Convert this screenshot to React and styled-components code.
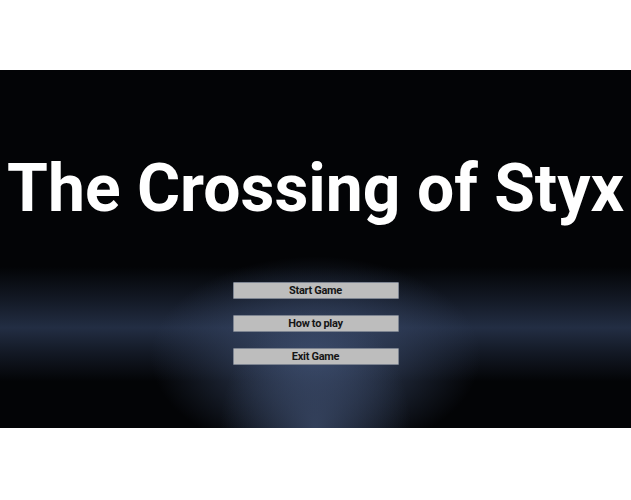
import React from 'react';
import styled, { createGlobalStyle } from 'styled-components';

const GlobalStyle = createGlobalStyle`
  html, body {
    margin: 0;
    padding: 0;
    background: #fff;
  }
  body {
    font-family: Roboto, "Liberation Sans", sans-serif;
  }
`

const Page = styled.div`
  width: 631px;
  height: 500px;
  display: flex;
  flex-direction: column;
  padding-top: 70px;
  box-sizing: border-box;
`

// dark stage with a soft bluish band and a glow that pours down the middle
const Stage = styled.div`
  height: 358px;
  display: flex;
  flex-direction: column;
  align-items: center;
  padding-top: 85px;
  box-sizing: border-box;
  background-color: #030406;
  background-image:
    radial-gradient(ellipse 95px 120px at 50% 100%, rgba(62, 78, 110, 0.75), rgba(62, 78, 110, 0) 100%),
    radial-gradient(ellipse 165px 100px at 50% 80%, rgba(58, 74, 106, 0.95), rgba(58, 74, 106, 0.5) 50%, rgba(58, 74, 106, 0) 100%),
    linear-gradient(to bottom,
      rgba(40, 52, 76, 0) 55%,
      rgba(38, 50, 74, 0.45) 64%,
      rgba(38, 50, 74, 0.9) 72%,
      rgba(38, 50, 74, 0.45) 79%,
      rgba(40, 52, 76, 0) 87%);
`

const Title = styled.h1`
  margin: 0;
  font-family: Roboto, "Liberation Sans", sans-serif;
  font-weight: 700;
  font-size: 66px;
  line-height: 67px;
  color: #fff;
  white-space: nowrap;
`

const Menu = styled.div`
  margin-top: 60px;
  display: flex;
  flex-direction: column;
  gap: 16px;
`

const MenuButton = styled.button`
  width: 166px;
  height: 17px;
  padding: 0;
  box-sizing: border-box;
  border: 1px solid #7d8491;
  border-radius: 1px;
  background: #bdbdbd;
  color: #151515;
  font-family: Roboto, "Liberation Sans", sans-serif;
  font-weight: 700;
  font-size: 11px;
  letter-spacing: -0.3px;
  line-height: 15px;
  cursor: pointer;
`

const App = () => {
  return (
    <Page>
      <GlobalStyle />
      <Stage>
        <Title>The Crossing of Styx</Title>
        <Menu>
          <MenuButton>Start Game</MenuButton>
          <MenuButton>How to play</MenuButton>
          <MenuButton>Exit Game</MenuButton>
        </Menu>
      </Stage>
    </Page>
  );
}

export default App;
